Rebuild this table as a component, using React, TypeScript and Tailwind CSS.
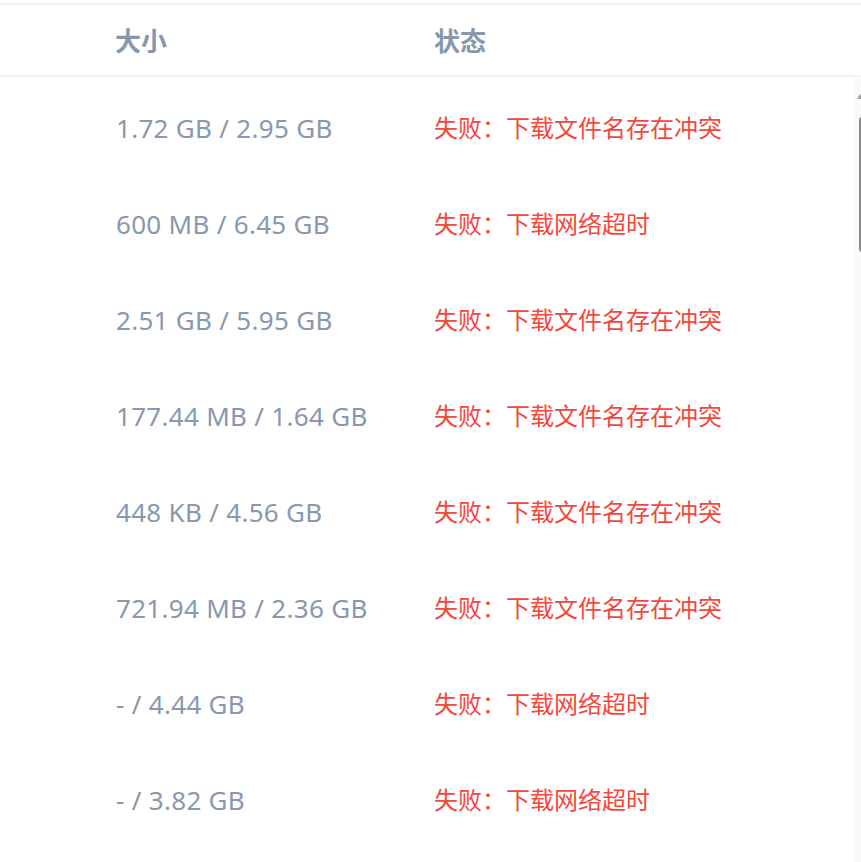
import React from "react";

const rows: [string, string][] = [
  ["1.72 GB / 2.95 GB", "失败：下载文件名存在冲突"],
  ["600 MB / 6.45 GB", "失败：下载网络超时"],
  ["2.51 GB / 5.95 GB", "失败：下载文件名存在冲突"],
  ["177.44 MB / 1.64 GB", "失败：下载文件名存在冲突"],
  ["448 KB / 4.56 GB", "失败：下载文件名存在冲突"],
  ["721.94 MB / 2.36 GB", "失败：下载文件名存在冲突"],
  ["- / 4.44 GB", "失败：下载网络超时"],
  ["- / 3.82 GB", "失败：下载网络超时"],
];

const font = {
  fontFamily: '"Noto Sans", "Noto Sans CJK SC", sans-serif',
};

export default function App() {
  return (
    <div className="w-[861px] h-[862px] overflow-hidden bg-white" style={font}>
      <div className="h-[3px]" />
      <div className="h-[2px] bg-[#f2f2f7]" />
      <div className="flex h-[72px] items-center border-b-2 border-[#f2f2f7] pt-[2px]">
        <div className="w-[434px] pl-[115px] text-[26px] font-bold text-[#8797ad]">大小</div>
        <div className="text-[26px] font-bold text-[#8797ad]">状态</div>
      </div>
      <div className="flex">
        <div className="flex-1 pt-[3px]">
          {rows.map(([size, status], i) => (
            <div key={i} className="flex h-[96px] items-center">
              <div className="w-[434px] pl-[116px] text-[26px] tracking-[0.3px] text-[#8898ae]">{size}</div>
              <div className="text-[24px] text-[#f4473c]">{status}</div>
            </div>
          ))}
        </div>
        <div className="relative w-[8px] h-[800px] bg-[#fafafa]">
          <div className="absolute left-[4px] top-[17px] w-0 h-0 border-l-[3px] border-r-[3px] border-b-[5px] border-l-transparent border-r-transparent border-b-[#a0a0a0]" />
          <div className="absolute left-[6px] top-[40px] w-[6px] h-[135px] rounded-[3px] bg-[#8a8a8a]" />
        </div>
      </div>
    </div>
  );
}
